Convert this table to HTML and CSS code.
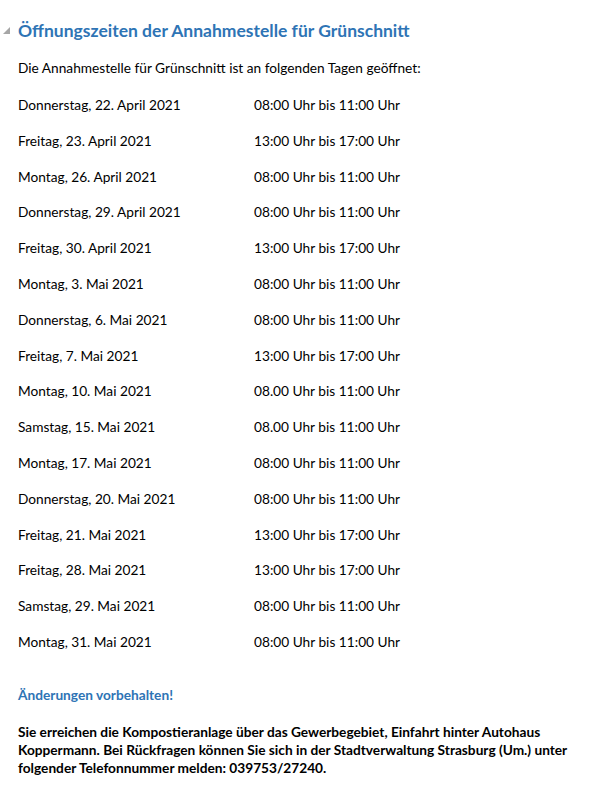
FILE: index.html
```html
<!DOCTYPE html>
<html lang="de">
<head>
    <meta charset="UTF-8">
    <title>Öffnungszeiten Grünschnitt</title>
    <link rel="stylesheet" href="styles.css">
</head>
<body>
    <main class="page">
        <h2 class="heading">
            <span class="collapse-arrow"></span>
            Öffnungszeiten der Annahmestelle für Grünschnitt
        </h2>
        <p class="intro">Die Annahmestelle für Grünschnitt ist an folgenden Tagen geöffnet:</p>

        <div class="schedule">
            <div class="row"><span class="day">Donnerstag, 22. April 2021</span><span class="time">08:00 Uhr bis 11:00 Uhr</span></div>
            <div class="row"><span class="day">Freitag, 23. April 2021</span><span class="time">13:00 Uhr bis 17:00 Uhr</span></div>
            <div class="row"><span class="day">Montag, 26. April 2021</span><span class="time">08:00 Uhr bis 11:00 Uhr</span></div>
            <div class="row"><span class="day">Donnerstag, 29. April 2021</span><span class="time">08:00 Uhr bis 11:00 Uhr</span></div>
            <div class="row"><span class="day">Freitag, 30. April 2021</span><span class="time">13:00 Uhr bis 17:00 Uhr</span></div>
            <div class="row"><span class="day">Montag, 3. Mai 2021</span><span class="time">08:00 Uhr bis 11:00 Uhr</span></div>
            <div class="row"><span class="day">Donnerstag, 6. Mai 2021</span><span class="time">08:00 Uhr bis 11:00 Uhr</span></div>
            <div class="row"><span class="day">Freitag, 7. Mai 2021</span><span class="time">13:00 Uhr bis 17:00 Uhr</span></div>
            <div class="row"><span class="day">Montag, 10. Mai 2021</span><span class="time">08.00 Uhr bis 11:00 Uhr</span></div>
            <div class="row"><span class="day">Samstag, 15. Mai 2021</span><span class="time">08.00 Uhr bis 11:00 Uhr</span></div>
            <div class="row"><span class="day">Montag, 17. Mai 2021</span><span class="time">08:00 Uhr bis 11:00 Uhr</span></div>
            <div class="row"><span class="day">Donnerstag, 20. Mai 2021</span><span class="time">08:00 Uhr bis 11:00 Uhr</span></div>
            <div class="row"><span class="day">Freitag, 21. Mai 2021</span><span class="time">13:00 Uhr bis 17:00 Uhr</span></div>
            <div class="row"><span class="day">Freitag, 28. Mai 2021</span><span class="time">13:00 Uhr bis 17:00 Uhr</span></div>
            <div class="row"><span class="day">Samstag, 29. Mai 2021</span><span class="time">08:00 Uhr bis 11:00 Uhr</span></div>
            <div class="row"><span class="day">Montag, 31. Mai 2021</span><span class="time">08:00 Uhr bis 11:00 Uhr</span></div>
        </div>

        <p class="notice">Änderungen vorbehalten!</p>
        <p class="info">Sie erreichen die Kompostieranlage über das Gewerbegebiet, Einfahrt hinter Autohaus Koppermann. Bei Rückfragen können Sie sich in der Stadtverwaltung Strasburg (Um.) unter folgender Telefonnummer melden: 039753/27240.</p>
    </main>
</body>
</html>
```

FILE: styles.css
```css
body {
    margin: 0;
    padding: 0;
    background-color: white;
    color: #000;
    font-family: Lato, "Open Sans", sans-serif;
    font-size: 13.7px;
}

.page {
    padding: 18px 18px 0 18px;
    width: 560px;
}

.heading {
    position: relative;
    margin: 0 0 15px 0;
    font-size: 17.5px;
    font-weight: 700;
    line-height: 26px;
    color: #2e74b5;
}

.collapse-arrow {
    position: absolute;
    left: -15px;
    top: 9px;
    width: 0;
    height: 0;
    border-left: 7px solid transparent;
    border-bottom: 7px solid #a6a6a6;
}

.intro {
    margin: 0 0 19px 0;
    line-height: 18px;
}

.schedule {
    display: flex;
    flex-direction: column;
}

.row {
    display: flex;
    height: 35.8px;
    line-height: 18px;
}

.day {
    width: 236px;
}

.notice {
    margin: 17px 0 19px 0;
    line-height: 18px;
    font-weight: 700;
    color: #2e74b5;
}

.info {
    margin: 0;
    line-height: 18px;
    font-weight: 700;
}
```
